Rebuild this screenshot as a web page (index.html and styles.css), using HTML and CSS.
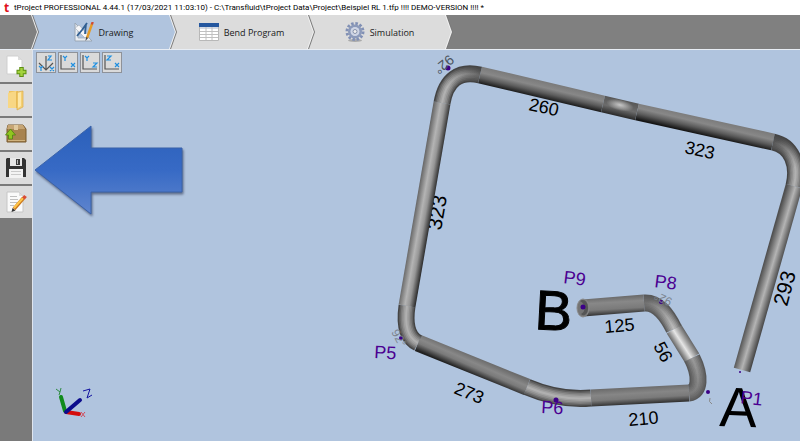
FILE: index.html
```html
<!DOCTYPE html>
<html lang="en">
  <head>
    <meta charset="utf-8">
    <title>tProject PROFESSIONAL</title>
    <link rel="stylesheet" href="styles.css">
  </head>
  <body>
    <header class="titlebar">
      <span class="logo">t</span>
      <span class="title">tProject PROFESSIONAL 4.44.1 (17/03/2021 11:03:10) - C:\Transfluid\tProject Data\Project\Beispiel RL 1.tfp !!!! DEMO-VERSION !!!! *</span>
    </header>

    <nav class="tabs">
      <span class="tab tab-start"></span>
      <button class="tab active">
        <svg class="tab-icon" viewBox="0 0 20 20">
          <path d="M1 1v18h17z" fill="#e9edf2" stroke="#9aa6b4"/>
          <path d="M4 9v7h7z" fill="#b0c4de" stroke="#9aa6b4" stroke-width=".7"/>
          <path d="M1 6l4-3 9 10-3 3z" fill="#f6f7f9" stroke="#a8b0ba" stroke-width=".7"/>
          <path d="M13 1L8 8 3 14M12 2l-1 10" fill="none" stroke="#315f91" stroke-width="1.8"/>
          <path d="M18 2l-5 14" stroke="#e59b25" stroke-width="2.4"/>
          <path d="M18.700 0l-.8 2.500" stroke="#d14b34" stroke-width="2.400"/>
          <path d="M12 15l-.5 4 2.500-3z" fill="#444"/>
        </svg>
        <span>Drawing</span>
      </button>
      <button class="tab">
        <svg class="tab-icon" viewBox="0 0 20 20">
          <path d="M.5 1.500h19v17H.5z" fill="#fff" stroke="#b8b8b8"/>
          <path d="M0 1h20v4H0z" fill="#24579f"/>
          <path d="M1 5h18v2H1z" fill="#d3dae5"/>
          <path d="M1 9.500h18M1 12.500h18M1 15.500h18M7 5v13M13 5v13" stroke="#c0c0c0"/>
        </svg>
        <span>Bend Program</span>
      </button>
      <button class="tab">
        <svg class="tab-icon" viewBox="0 0 20 20">
          <ellipse cx="10" cy="18.500" rx="7" ry="1.500" fill="#777" opacity=".5"/>
          <circle cx="10" cy="9.500" r="8" fill="none" stroke="#8190b5" stroke-width="3" stroke-dasharray="2.500 1.700"/>
          <circle cx="10" cy="9.500" r="5.500" fill="#c3cce3" stroke="#8c9aba" stroke-width="3"/>
          <circle cx="10" cy="9.500" r="4.500" fill="#cfd5e5"/>
          <circle cx="10" cy="9.500" r="2" fill="#eee" stroke="#8792aa"/>
        </svg>
        <span>Simulation</span>
      </button>
    </nav>

    <main class="workspace">
      <aside class="sidebar">
        <button class="tool" aria-label="New">
          <svg viewBox="0 0 22 22">
            <path d="M2 1h11l4 4v14H2z" fill="#fff" stroke="#cfcfcf"/>
            <path d="M13 1v4h4z" fill="#ddd"/>
            <path d="M16.500 12v10M11.500 17h10" stroke="#5d8f13" stroke-width="4.500"/>
            <path d="M16.500 13v8M12.500 17h8" stroke="#a3d33d" stroke-width="2.500"/>
          </svg>
        </button>
        <button class="tool" aria-label="Open">
          <svg viewBox="0 0 22 22">
            <path d="M4 2h9v17H3z" fill="#efc35c"/>
            <path d="M3 4l8-2v17H3z" fill="#f8d784"/>
            <path d="M12 3l6-1v16l-6 3z" fill="#f4cf72" stroke="#dcac49" stroke-width=".7"/>
            <path d="M13 4l3-1v14l-3 2z" fill="#fde7a8"/>
          </svg>
        </button>
        <button class="tool" aria-label="Import">
          <svg viewBox="0 0 22 22">
            <path d="M3 2h15l3 4v13H2V6z" fill="#a8834f" stroke="#785a2f"/>
            <path d="M3 2h15l2 4H2z" fill="#c6a574"/>
            <path d="M9 2h4v5H9z" fill="#e0c99d"/>
            <path d="M3 17h17v1H3z" fill="#d1b37e"/>
            <path d="M5.500 6l5 6h-3v4h-4v-4h-3z" fill="#91c51f" stroke="#4e8113" stroke-width=".8"/>
          </svg>
        </button>
        <button class="tool" aria-label="Save">
          <svg viewBox="0 0 22 22">
            <path d="M2 1h17l2 2v17H1V2z" fill="#333"/>
            <path d="M5 1h12v8H5z" fill="#e7e7e7"/>
            <path d="M11 2h4v6h-4z" fill="#3d3d3d"/>
            <path d="M12 3h1v4h-1z" fill="#bbb"/>
            <path d="M4 12h14v9H4z" fill="#f3f3f3"/>
            <path d="M6 14.500h10M6 17.500h10" stroke="#c9c9c9"/>
          </svg>
        </button>
        <button class="tool" aria-label="Edit">
          <svg viewBox="0 0 22 22">
            <path d="M2 1h12l4 4v16H2z" fill="#fafafa" stroke="#c6c6c6"/>
            <path d="M14 1v4h4z" fill="#ddd"/>
            <path d="M5 5.500h7M5 8.500h8M5 11.500h7M5 14.500h4" stroke="#c0c0c0"/>
            <path d="M18.500 7L9 18" stroke="#c9761c" stroke-width="3.500"/>
            <path d="M18 7l-9 10" stroke="#ffc64a" stroke-width="2"/>
            <path d="M20.500 5l-2 2.500" stroke="#d94c34" stroke-width="3.500"/>
            <path d="M7.500 17l-1 4 4-1.500z" fill="#333"/>
          </svg>
        </button>
      </aside>

      <section class="stage">
        <div class="views">
          <button class="view" aria-label="Isometric view">
            <svg viewBox="0 0 18 18">
              <path d="M9 2v14M2 9l7 7 7-7" class="axis"/>
              <path d="M11 2h3l-3 4h4M2 12l2 2 2-2M4 14v3M13 13l4 4M17 13l-4 4" class="mark"/>
            </svg>
          </button>
          <button class="view" aria-label="XY view">
            <svg viewBox="0 0 18 18">
              <path d="M2 1v14h14" class="axis"/>
              <path d="M4 2l2 2 2-2M6 4v3M12 9l4 4M16 9l-4 4" class="mark"/>
            </svg>
          </button>
          <button class="view" aria-label="ZY view">
            <svg viewBox="0 0 18 18">
              <path d="M2 1v14h14" class="axis"/>
              <path d="M4 2l2 2 2-2M6 4v3M12 9h4l-4 4h4" class="mark"/>
            </svg>
          </button>
          <button class="view" aria-label="XZ view">
            <svg viewBox="0 0 18 18">
              <path d="M2 1v14h14" class="axis"/>
              <path d="M4 2h4l-4 4h4M12 9l4 4M16 9l-4 4" class="mark"/>
            </svg>
          </button>
        </div>

        <svg class="scene" viewBox="33 50 767 391" preserveAspectRatio="xMinYMin meet">
          <defs>
            <!-- shading across the straight tubes -->
            <linearGradient id="gLeft" gradientUnits="userSpaceOnUse" x1="416" y1="203" x2="433" y2="206">
              <stop offset="0" stop-color="#666"/><stop offset=".4" stop-color="#b4b4b4"/><stop offset=".65" stop-color="#969696"/><stop offset="1" stop-color="#2c2c2c"/>
            </linearGradient>
            <linearGradient id="gTop" gradientUnits="userSpaceOnUse" x1="543" y1="81" x2="539" y2="98">
              <stop offset="0" stop-color="#7a7a7a"/><stop offset=".35" stop-color="#888"/><stop offset=".65" stop-color="#5c5c5c"/><stop offset="1" stop-color="#161616"/>
            </linearGradient>
            <linearGradient id="gTop2" gradientUnits="userSpaceOnUse" x1="707" y1="118" x2="703" y2="135">
              <stop offset="0" stop-color="#7a7a7a"/><stop offset=".35" stop-color="#888"/><stop offset=".65" stop-color="#5c5c5c"/><stop offset="1" stop-color="#161616"/>
            </linearGradient>
            <linearGradient id="gSpotTube" gradientUnits="userSpaceOnUse" x1="622" y1="100" x2="618" y2="117">
              <stop offset="0" stop-color="#585858"/><stop offset=".5" stop-color="#6c6c6c"/><stop offset="1" stop-color="#222"/>
            </linearGradient>
            <linearGradient id="gRight" gradientUnits="userSpaceOnUse" x1="760" y1="276" x2="777" y2="281">
              <stop offset="0" stop-color="#505050"/><stop offset=".5" stop-color="#b4b4b4"/><stop offset="1" stop-color="#404040"/>
            </linearGradient>
            <linearGradient id="gLow" gradientUnits="userSpaceOnUse" x1="476" y1="357" x2="469" y2="373">
              <stop offset="0" stop-color="#6c6c6c"/><stop offset=".35" stop-color="#888"/><stop offset=".6" stop-color="#7a7a7a"/><stop offset="1" stop-color="#222"/>
            </linearGradient>
            <linearGradient id="gBase" gradientUnits="userSpaceOnUse" x1="640" y1="387" x2="641" y2="404">
              <stop offset="0" stop-color="#6c6c6c"/><stop offset=".35" stop-color="#868686"/><stop offset=".65" stop-color="#7a7a7a"/><stop offset="1" stop-color="#303030"/>
            </linearGradient>
            <linearGradient id="gEnd" gradientUnits="userSpaceOnUse" x1="615" y1="297" x2="616" y2="314">
              <stop offset="0" stop-color="#6c6c6c"/><stop offset=".3" stop-color="#888"/><stop offset=".7" stop-color="#7a7a7a"/><stop offset="1" stop-color="#383838"/>
            </linearGradient>
            <linearGradient id="gShort" gradientUnits="userSpaceOnUse" x1="676" y1="348" x2="690" y2="339">
              <stop offset="0" stop-color="#666"/><stop offset=".45" stop-color="#e6e6e6"/><stop offset="1" stop-color="#666"/>
            </linearGradient>
            <radialGradient id="gSpot" gradientUnits="userSpaceOnUse" cx="0" cy="0" r="14" gradientTransform="translate(620 105) rotate(13) scale(1 .4)">
              <stop offset="0" stop-color="#c8c8c8"/><stop offset="1" stop-color="#c8c8c8" stop-opacity="0"/>
            </radialGradient>
            <!-- highlights fade towards one end of each bend -->
            <linearGradient id="fTL" gradientUnits="userSpaceOnUse" x1="482" y1="75" x2="450" y2="92">
              <stop offset="0" stop-color="#fff" stop-opacity=".2"/><stop offset="1" stop-color="#fff"/>
            </linearGradient>
            <linearGradient id="fTR" gradientUnits="userSpaceOnUse" x1="775" y1="142" x2="792" y2="170">
              <stop offset="0" stop-color="#fff" stop-opacity=".15"/><stop offset="1" stop-color="#fff"/>
            </linearGradient>
            <linearGradient id="fBR" gradientUnits="userSpaceOnUse" x1="690" y1="392" x2="693" y2="358">
              <stop offset="0" stop-color="#fff" stop-opacity=".3"/><stop offset="1" stop-color="#fff" stop-opacity=".6"/>
            </linearGradient>
            <linearGradient id="fP8" gradientUnits="userSpaceOnUse" x1="646" y1="303" x2="673" y2="328">
              <stop offset="0" stop-color="#fff" stop-opacity=".2"/><stop offset="1" stop-color="#fff"/>
            </linearGradient>
            <linearGradient id="arrowFill" x1="0" y1="0" x2="0" y2="1">
              <stop offset="0" stop-color="#2b60ba"/><stop offset=".5" stop-color="#376ac5"/><stop offset="1" stop-color="#5f85ce"/>
            </linearGradient>
            <path id="bTL" d="M442 103C446 80 459 70 480 75"/>
            <path id="bTR" d="M773 142C792 146 799 165 794 186"/>
            <path id="bBL" d="M407 306C404 327 408 338 418 343"/>
            <path id="bP6" d="M527 387C548 396 568 400 591 398"/>
            <path id="bBR" d="M689 393C700 392 701 376 692 358"/>
            <path id="bP8" d="M644 303C658 302 667 315 674 329"/>
          </defs>

          <text class="size-l" transform="translate(441 231) rotate(-80)">323</text>

          <!-- straight tubes -->
          <g class="tube">
            <path d="M442 103L407 306" stroke="url(#gLeft)"/>
            <path d="M480 75L603 104" stroke="url(#gTop)"/>
            <path d="M603 104L637 112" stroke="url(#gSpotTube)"/>
            <path d="M637 112L773 142" stroke="url(#gTop2)"/>
            <path d="M794 186L742 370" stroke="url(#gRight)"/>
            <path d="M418 343L527 387" stroke="url(#gLow)"/>
            <path d="M591 398L689 393" stroke="url(#gBase)"/>
            <path d="M583 308L644 303" stroke="url(#gEnd)"/>
            <path d="M674 329L692 358" stroke="url(#gShort)"/>
          </g>
          <path d="M605 96L637 104 633 119 601 112z" fill="url(#gSpot)"/>

          <!-- bends -->
          <g class="tube bend">
            <use href="#bTL"/><use href="#bTR"/><use href="#bBL"/><use href="#bP6"/>
          </g>
          <g class="tube bend-light">
            <use href="#bBR"/><use href="#bP8"/>
          </g>
          <g class="shine" stroke="url(#fTL)">
            <use href="#bTL" class="w1"/><use href="#bTL" class="w2"/><use href="#bTL" class="w3"/><use href="#bTL" class="w4"/><use href="#bTL" class="w5"/>
          </g>
          <g class="shine" stroke="url(#fTR)">
            <use href="#bTR" class="w1"/><use href="#bTR" class="w2"/><use href="#bTR" class="w3"/><use href="#bTR" class="w4"/><use href="#bTR" class="w5"/>
          </g>
          <g class="shine" stroke="#fff">
            <use href="#bBL" class="w1"/><use href="#bBL" class="w2"/><use href="#bBL" class="w3"/><use href="#bBL" class="w4"/><use href="#bBL" class="w5"/>
            <use href="#bP6" class="w1"/><use href="#bP6" class="w2"/><use href="#bP6" class="w3"/><use href="#bP6" class="w4"/><use href="#bP6" class="w5"/>
          </g>
          <g class="shine" stroke="url(#fBR)">
            <use href="#bBR" class="w1"/><use href="#bBR" class="w2"/><use href="#bBR" class="w3"/><use href="#bBR" class="w4"/><use href="#bBR" class="w5"/>
          </g>
          <g class="shine" stroke="url(#fP8)">
            <use href="#bP8" class="w1"/><use href="#bP8" class="w2"/><use href="#bP8" class="w3"/><use href="#bP8" class="w4"/><use href="#bP8" class="w5"/>
          </g>
          <ellipse cx="583" cy="308" rx="6" ry="9" fill="#747474" stroke="#8a8a8a"/>
          <path d="M580 301c4-3 8 1 8 7s-4 9-7 6c5-2 5-10-1-13z" fill="#555"/>

          <!-- points -->
          <g fill="#3c0087">
            <circle cx="448" cy="68" r="2.500"/>
            <circle cx="401" cy="338" r="2"/>
            <circle cx="556" cy="400" r="2.500"/>
            <circle cx="583" cy="307" r="2.500"/>
            <circle cx="661" cy="302" r="2"/>
            <circle cx="708" cy="392" r="2"/>
            <circle cx="740" cy="372" r="1"/>
          </g>

          <!-- lengths -->
          <g class="size">
            <text transform="translate(528 110) rotate(12)">260</text>
            <text transform="translate(684 153) rotate(12)">323</text>
            <text transform="translate(453 393) rotate(22)">273</text>
            <text transform="translate(629 426) rotate(-5)">210</text>
            <text transform="translate(605 333) rotate(-5)">125</text>
            <text transform="translate(653 346) rotate(62)">56</text>
          </g>
          <text class="size-l" transform="translate(787 307) rotate(-75)">293</text>

          <g class="end">
            <text class="end-b" transform="translate(534 329) rotate(3)">B</text>
            <text transform="translate(719 426) rotate(2)">A</text>
          </g>

          <g class="point">
            <text transform="translate(563 283) rotate(7)">P9</text>
            <text transform="translate(654 287) rotate(7)">P8</text>
            <text transform="translate(541 413) rotate(3)">P6</text>
            <text transform="translate(374 358) rotate(3)">P5</text>
            <text transform="translate(740 403) rotate(7)">P1</text>
          </g>

          <g class="angle">
            <text class="angle-l" transform="translate(449 54) rotate(140)">92°</text>
            <text transform="translate(391 332) rotate(62)">92°</text>
            <text transform="translate(673 299) rotate(205)">92°</text>
          </g>
          <path d="M710 398q-2 4 2 6" fill="none" stroke="#888"/>

          <!-- coordinate axes -->
          <g class="triad">
            <path d="M66 412L79 414" stroke="#d40c0c"/>
            <path d="M65 411L61 397" stroke="#118b1c"/>
            <path d="M66 412L80 400" stroke="#0c0c8c"/>
          </g>
          <g class="triad-marks">
            <path d="M56 389l4 3 1-4M60 392l-1 3" stroke="#2e8b44"/>
            <path d="M83 391l7-2-3 9 5-3" stroke="#1212a0"/>
            <path d="M81 412l4 5M85 412l-4 5" stroke="#d24a5a"/>
          </g>

          <path class="pointer" d="M35 170L91 126V148H182V192H91V214z" fill="url(#arrowFill)"/>
        </svg>
      </section>
    </main>
  </body>
</html>
```

FILE: styles.css
```css
html,
body {
  margin: 0;
  padding: 0;
  height: 100%;
}

body {
  display: flex;
  flex-direction: column;
  overflow: hidden;
  background: #b0c4de;
  font-family: "Open Sans", "Noto Sans", sans-serif;
  font-size: 9px;
  color: #1a1a1a;
}

button {
  margin: 0;
  padding: 0;
  border: 0;
  font: inherit;
  color: inherit;
  cursor: pointer;
}

.titlebar {
  display: flex;
  align-items: center;
  flex: none;
  height: 15px;
  padding-left: 4px;
  background: #fff;
  color: #000;
  white-space: nowrap;
}

.logo {
  width: 10px;
  font-size: 12px;
  font-weight: bold;
  line-height: 14px;
  color: #e0101b;
}

.title {
  font-family: Roboto, "Open Sans", sans-serif;
  font-size: 8px;
  line-height: 14px;
}

.tabs {
  display: flex;
  flex: none;
  height: 34px;
  background: #808080;
  border-bottom: 1px solid #e8edf4;
}

.tab {
  position: relative;
  display: flex;
  align-items: center;
  justify-content: center;
  gap: 5px;
  flex: none;
  box-sizing: border-box;
  width: 144px;
  margin-right: -6px;
  padding-right: 3px;
  background: #777;
  clip-path: polygon(0 0, calc(100% - 6px) 0, 100% 50%, calc(100% - 6px) 100%, 0 100%);
}

/* white edge, then the face of the tab */
.tab::before,
.tab::after {
  content: "";
  position: absolute;
  z-index: -1;
  top: 0;
  bottom: 0;
  left: 0;
  right: 1px;
  background: #f4f4f4;
  clip-path: polygon(0 0, calc(100% - 6px) 0, 100% 50%, calc(100% - 6px) 100%, 0 100%);
}

.tab::after {
  right: 2px;
  background: #dcdcdc;
}

.tab:nth-child(1) {
  z-index: 4;
}

.tab:nth-child(2) {
  z-index: 3;
}

.tab:nth-child(3) {
  z-index: 2;
}

.tab:nth-child(4) {
  z-index: 1;
}

.tab-start {
  width: 39px;
}

.tab-start::after {
  background: #808080;
}

.active::after {
  background: #b0c4de;
}

.tab-icon {
  width: 20px;
  height: 20px;
}

.workspace {
  display: flex;
  flex: 1;
  min-height: 0;
}

.sidebar {
  display: flex;
  flex-direction: column;
  gap: 2px;
  flex: none;
  width: 32px;
  background: #7a7a7a;
  border-right: 1px solid #dfe5ee;
}

.tool {
  display: flex;
  align-items: center;
  justify-content: center;
  height: 32px;
  background: #dcdcdc;
}

.tool svg {
  width: 22px;
  height: 22px;
}

.stage {
  position: relative;
  flex: 1;
  min-width: 0;
  background: #b0c4de;
}

.views {
  position: absolute;
  top: 2px;
  left: 3px;
  display: flex;
  gap: 2px;
}

.view {
  display: flex;
  align-items: center;
  justify-content: center;
  box-sizing: border-box;
  width: 20px;
  height: 21px;
  background: #dadada;
  border: 1px solid #8e9299;
}

.view svg {
  width: 18px;
  height: 18px;
}

.axis {
  fill: none;
  stroke: #555;
  stroke-width: 1.2;
}

.mark {
  fill: none;
  stroke: #1f8fe0;
  stroke-width: 1.2;
}

.scene {
  display: block;
  width: 100%;
  height: 100%;
  font-family: "Liberation Sans", Arial, sans-serif;
}

.tube {
  fill: none;
  stroke-width: 17;
}

.bend {
  stroke: #444;
}

.bend-light {
  stroke: #585858;
}

.shine {
  fill: none;
  stroke-opacity: 0.16;
}

.w1 {
  stroke-width: 14;
}

.w2 {
  stroke-width: 11;
}

.w3 {
  stroke-width: 8;
}

.w4 {
  stroke-width: 5;
}

.w5 {
  stroke-width: 2;
}

.size {
  font-size: 18px;
}

.size-l {
  font-size: 21px;
}

.point {
  font-size: 18px;
  fill: #4b0091;
}

.angle {
  font-size: 12px;
  fill: #7c8490;
}

.angle-l {
  font-size: 14px;
  fill: #4d5560;
}

.end {
  font-size: 56px;
}

.end-b {
  stroke: #000;
  stroke-width: 1;
}

.triad {
  fill: none;
  stroke-width: 4;
  stroke-linecap: round;
}

.triad-marks {
  fill: none;
  stroke-width: 1;
}

.pointer {
  stroke: #3a62a8;
  stroke-width: 1;
  filter: drop-shadow(1px 2px 1px rgba(40, 50, 80, 0.6));
}
```
